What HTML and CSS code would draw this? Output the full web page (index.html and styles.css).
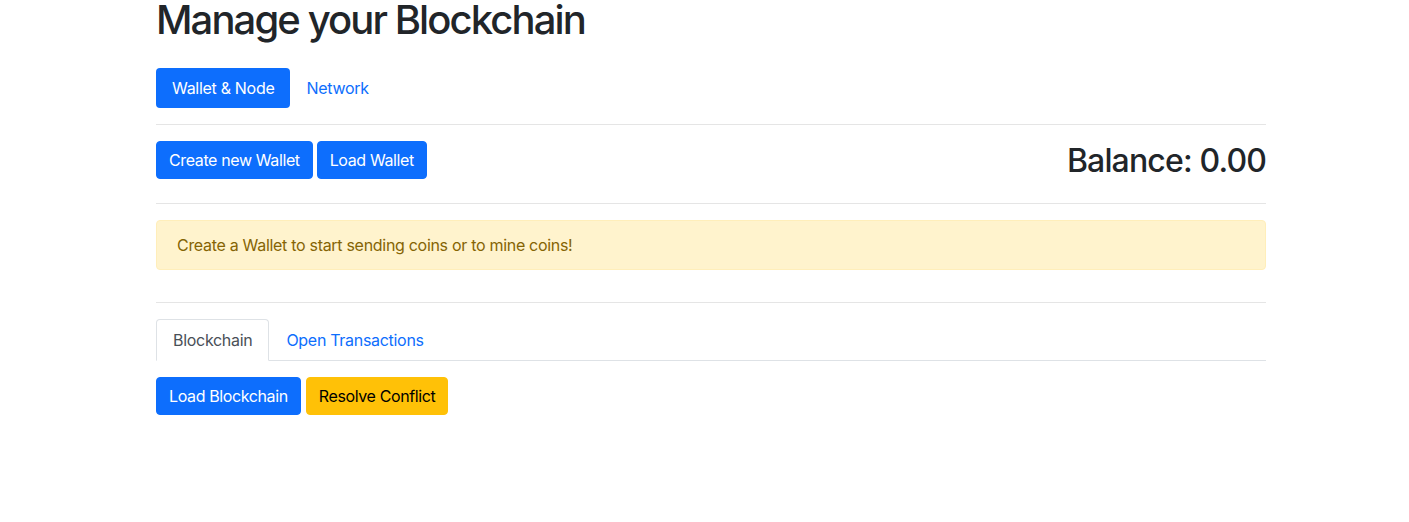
FILE: index.html
```html
<!DOCTYPE html>
<html lang="en">
<head>
<meta charset="utf-8">
<title>Manage your Blockchain</title>
<link rel="stylesheet" href="styles.css">
</head>
<body>
<div class="container">
  <h1 class="title">Manage your Blockchain</h1>
  <nav class="pills">
    <a class="pill active" href="#">Wallet &amp; Node</a>
    <a class="pill" href="#">Network</a>
  </nav>
  <hr class="divider">
  <div class="wallet-row">
    <div class="btn-group">
      <button class="btn btn-primary">Create new Wallet</button>
      <button class="btn btn-primary">Load Wallet</button>
    </div>
    <h2 class="balance">Balance: 0.00</h2>
  </div>
  <hr class="divider">
  <div class="alert">Create a Wallet to start sending coins or to mine coins!</div>
  <hr class="divider">
  <nav class="tabs">
    <a class="tab active" href="#">Blockchain</a>
    <a class="tab" href="#">Open Transactions</a>
  </nav>
  <div class="btn-group chain-actions">
    <button class="btn btn-primary">Load Blockchain</button>
    <button class="btn btn-warning">Resolve Conflict</button>
  </div>
</div>
</body>
</html>
```

FILE: styles.css
```css
* { box-sizing: border-box; }
html, body { margin: 0; padding: 0; background: #fff; }
body {
  font-family: Inter, "Noto Sans", "Liberation Sans", sans-serif;
  font-size: 16px;
  line-height: 24px;
  letter-spacing: -0.3px;
  color: #212529;
}
.container {
  width: 1110px;
  margin-left: 156px;
}
.title {
  margin: 0 0 28px 0;
  font-size: 40px;
  line-height: 40px;
  font-weight: 500;
  letter-spacing: -1.9px;
}
.pills { display: flex; }
.pill {
  display: block;
  padding: 8px 16px;
  border-radius: 4px;
  color: #0d6efd;
  text-decoration: none;
}
.pill.active { background: #0d6efd; color: #fff; }
.divider {
  margin: 16px 0;
  border: 0;
  border-top: 1px solid rgba(0,0,0,0.1);
  height: 0;
}
.wallet-row {
  display: flex;
  justify-content: space-between;
  align-items: flex-start;
}
.btn-group { display: flex; gap: 4px; }
.btn {
  font-family: inherit;
  font-size: 16px;
  line-height: 24px;
  letter-spacing: -0.38px;
  padding: 6px 12px;
  border: 1px solid transparent;
  border-radius: 4px;
  font-weight: 400;
  cursor: pointer;
}
.btn-primary { background: #0d6efd; border-color: #0d6efd; color: #fff; }
.btn-warning { background: #ffc107; border-color: #ffc107; color: #000; }
.balance {
  margin: 0 0 7px 0;
  padding-top: 1px;
  font-size: 32px;
  line-height: 38.4px;
  font-weight: 500;
  letter-spacing: -0.85px;
}
.alert {
  padding: 12px 20px;
  margin-bottom: 32px;
  border: 1px solid #ffeeba;
  border-radius: 4px;
  background: #fff3cd;
  color: #856404;
}
.tabs {
  display: flex;
  border-bottom: 1px solid #dee2e6;
}
.tab {
  display: block;
  padding: 8px 16px;
  margin-bottom: -1px;
  border: 1px solid transparent;
  border-top-left-radius: 4px;
  border-top-right-radius: 4px;
  color: #0d6efd;
  text-decoration: none;
}
.tab.active {
  color: #495057;
  background: #fff;
  border-color: #dee2e6 #dee2e6 #fff;
}
.chain-actions { margin-top: 16px; gap: 5px; }
```
